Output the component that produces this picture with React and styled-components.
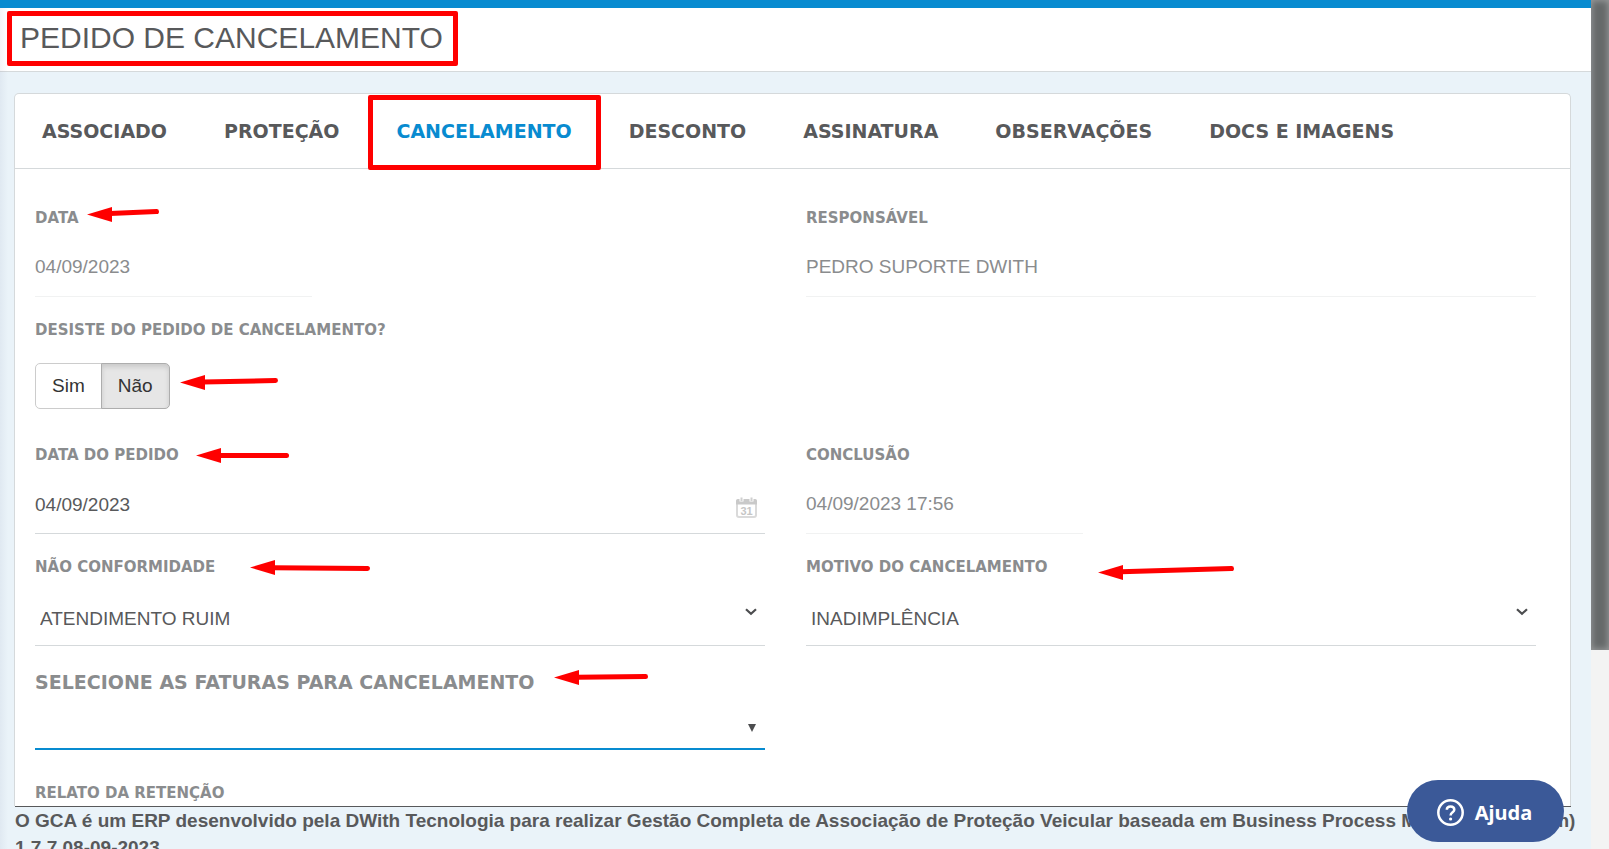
import React, { useState } from "react";
import styled, { createGlobalStyle, css } from "styled-components";

const GlobalStyle = createGlobalStyle`
  * {
    box-sizing: border-box;
  }
  body {
    margin: 0;
    background: #eaf3f9;
    color: #58595b;
    font: 19px/27px "Liberation Sans", Arial, sans-serif;
  }
`;

const heavy = css`
  font-family: "Arial Black", "DejaVu Sans", sans-serif;
  font-weight: 700;
`;

const Page = styled.div`
  display: flex;
  height: 100vh;
  overflow: hidden;
`;

const Main = styled.div`
  position: relative;
  flex: 1;
  min-width: 0;
  display: flex;
  flex-direction: column;
  border-top: 8px solid #088bd0;
  &::after {
    content: "";
    position: absolute;
    top: 0;
    bottom: 0;
    left: 0;
    width: 8px;
    background: linear-gradient(to right, rgba(60, 70, 120, 0.06), transparent);
    pointer-events: none;
  }
`;

const Header = styled.header`
  display: flex;
  padding: 3px 7px 5px;
  background: #fff;
  border-bottom: 1px solid #d5d9db;
`;

const Title = styled.h1`
  margin: 0;
  padding: 0 10px 2px 8px;
  border: 5px solid #f00;
  border-radius: 2px;
  font-size: 30px;
  font-weight: 400;
  line-height: 43px;
`;

const Card = styled.section`
  flex: 1;
  min-height: 0;
  margin: 21px 20px 0 14px;
  overflow: hidden;
  background: #fff;
  border: 1px solid #d5d9db;
  border-bottom: 0;
  border-radius: 5px 5px 0 0;
`;

const Tabs = styled.nav`
  display: flex;
  gap: 3px;
  border-bottom: 1px solid #d5d9db;
`;

const Tab = styled.button`
  ${heavy}
  position: relative;
  padding: 0 27px;
  border: 0;
  background: none;
  color: ${p => (p.$active ? "#088bd0" : "#58595b")};
  font-size: 19px;
  line-height: 74px;
  white-space: nowrap;
  cursor: pointer;
`;

const TabFrame = styled.span`
  position: absolute;
  inset: 1px -2px -2px -1px;
  border: 5px solid #f00;
  border-radius: 2px;
  pointer-events: none;
`;

const Form = styled.form`
  display: grid;
  grid-template-columns: 1fr 1fr;
  gap: 22px 41px;
  padding: 38px 34px 38px 20px;
`;

const Field = styled.div`
  position: relative;
  grid-column: ${p => p.$column || 1};
  min-width: 0;
`;

const Label = styled.label`
  ${heavy}
  display: block;
  margin-bottom: 8px;
  color: #8a8c8e;
  font-size: ${p => (p.$large ? 19 : 15)}px;
  line-height: ${p => (p.$large ? 28 : 22)}px;
  white-space: nowrap;
`;

const Input = styled.input`
  display: block;
  width: ${p => (p.$short ? "38%" : "100%")};
  height: 60px;
  padding: ${p => (p.readOnly ? 0 : 2)}px 0 0;
  border: 0;
  border-bottom: 1px solid ${p => (p.readOnly ? "#f1f2f2" : "#d5d9db")};
  outline: 0;
  background: none;
  color: ${p => (p.readOnly ? "#8a8c8e" : "#58595b")};
  font: inherit;
`;

const Select = styled.select`
  display: block;
  width: 100%;
  height: ${p => (p.$focus ? 46 : 60)}px;
  padding: 5px 40px 0 5px;
  border: 0;
  border-bottom: ${p => (p.$focus ? "2px solid #088bd0" : "1px solid #d5d9db")};
  border-radius: 0;
  outline: 0;
  appearance: none;
  background: none;
  color: #58595b;
  font: inherit;
`;

const Control = styled.div`
  position: relative;
  margin-bottom: ${p => (p.$spaced ? 10 : 0)}px;
`;

const ControlIcon = styled.svg`
  position: absolute;
  right: 8px;
  bottom: ${p => p.$bottom || 16}px;
  pointer-events: none;
`;

const Toggle = styled.div`
  display: flex;
  margin: 22px 0 13px;
`;

const ToggleButton = styled.button`
  height: 46px;
  padding: 0 16px 2px;
  border: 1px solid ${p => (p.$on ? "#adadad" : "#ccc")};
  border-radius: 5px 0 0 5px;
  background: ${p => (p.$on ? "#e6e6e6" : "#fff")};
  box-shadow: ${p => (p.$on ? "inset 0 3px 5px rgba(0, 0, 0, 0.125)" : "none")};
  color: #333;
  font: inherit;
  cursor: pointer;
  & + & {
    margin-left: -1px;
    border-radius: 0 5px 5px 0;
  }
`;

const Footer = styled.footer`
  height: 43px;
  margin: 0 20px 0 15px;
  border-top: 1px solid #58595b;
  font-weight: 700;
  white-space: nowrap;
`;

const Track = styled.div`
  width: 18px;
  background: #f3f3f3;
`;

const Thumb = styled.div`
  height: 76.6%;
  background: #66696a;
  box-shadow: inset 0 0 6px 1px #999b9c;
`;

const Help = styled.button`
  position: fixed;
  right: 45px;
  bottom: 7px;
  display: flex;
  align-items: center;
  justify-content: center;
  gap: 11px;
  width: 157px;
  height: 62px;
  padding: 2px 2px 0 0;
  border: 0;
  border-radius: 31px;
  background: #3b5998;
  color: #fff;
  font: 700 20px "Noto Sans", sans-serif;
  cursor: pointer;
`;

const ArrowSvg = styled.svg`
  position: absolute;
  top: ${p => p.$top}px;
  left: ${p => p.$left}px;
  overflow: visible;
  pointer-events: none;
`;

// Red pointer: the tip is at (left, top), the tail ends `length` to the right.
const Arrow = ({ left, top, length, rise = 0 }) => (
  <ArrowSvg $left={left} $top={top} width={length} height="1" aria-hidden="true">
    <path d="M0 -0.5 L25 -8 V7 Z" fill="#f00" />
    <path
      d={`M23 ${(-rise * 23) / length - 0.5} L${length - 2.5} ${-rise - 0.5}`}
      stroke="#f00"
      strokeWidth="5"
      strokeLinecap="round"
    />
  </ArrowSvg>
);

const Chevron = () => (
  <ControlIcon $bottom={30} width="12" height="8" viewBox="0 0 12 8">
    <path d="M1 1.2 L6 5.8 L11 1.2" fill="none" stroke="#4c4d4f" strokeWidth="2.2" />
  </ControlIcon>
);

const Triangle = () => (
  <ControlIcon $bottom={18} width="10" height="8" viewBox="0 0 10 8">
    <path d="M1 0 H9 L5 8 Z" fill="#4c4d4f" />
  </ControlIcon>
);

const Calendar = () => (
  <ControlIcon $bottom={16} width="21" height="21" viewBox="0 0 21 21">
    <rect x="1" y="3" width="19" height="17" rx="2" fill="#fff" stroke="#dadada" strokeWidth="2" />
    <path d="M0 7.5 V4 Q0 2 2 2 H19 Q21 2 21 4 V7.5 Z" fill="#c9c9c9" />
    <path d="M5.5 0 V4.5 M15.5 0 V4.5" stroke="#fff" strokeWidth="4" />
    <path d="M5.5 0.5 V4 M15.5 0.5 V4" stroke="#d0d0d0" strokeWidth="2" />
    <text
      x="10.5"
      y="17.5"
      textAnchor="middle"
      fill="#c6c6c6"
      fontFamily="Liberation Sans, sans-serif"
      fontSize="11"
      fontWeight="700"
    >
      31
    </text>
  </ControlIcon>
);

const HelpIcon = () => (
  <svg width="27" height="27" viewBox="0 0 27 27" fill="none" stroke="#fff" aria-hidden="true">
    <circle cx="13.5" cy="13.5" r="12.2" strokeWidth="2.5" />
    <path
      d="M9.8 10.8 C9.8 6.4 17.3 6.4 17.3 10.8 C17.3 13.5 13.6 13.3 13.6 16.6"
      strokeWidth="2.5"
    />
    <circle cx="13.6" cy="20" r="1.6" fill="#fff" stroke="none" />
  </svg>
);

const tabs = [
  "ASSOCIADO",
  "PROTEÇÃO",
  "CANCELAMENTO",
  "DESCONTO",
  "ASSINATURA",
  "OBSERVAÇÕES",
  "DOCS E IMAGENS"
];

const SelectField = ({ id, label, value, column, children }) => (
  <Field $column={column}>
    <Label htmlFor={id}>{label}</Label>
    <Control>
      <Select id={id} defaultValue={value}>
        <option>{value}</option>
      </Select>
      <Chevron />
    </Control>
    {children}
  </Field>
);

export default function App() {
  const [tab, setTab] = useState("CANCELAMENTO");
  const [desiste, setDesiste] = useState("Não");

  return (
    <Page>
      <GlobalStyle />
      <Main>
        <Header>
          <Title>PEDIDO DE CANCELAMENTO</Title>
        </Header>
        <Card>
          <Tabs>
            {tabs.map(name => (
              <Tab key={name} type="button" $active={name === tab} onClick={() => setTab(name)}>
                {name}
                {name === "CANCELAMENTO" && <TabFrame />}
              </Tab>
            ))}
          </Tabs>
          <Form>
            <Field>
              <Label htmlFor="data">DATA</Label>
              <Input id="data" $short readOnly defaultValue="04/09/2023" />
              <Arrow left={52} top={8} length={72} rise={3} />
            </Field>
            <Field $column={2}>
              <Label htmlFor="responsavel">RESPONSÁVEL</Label>
              <Input id="responsavel" readOnly defaultValue="PEDRO SUPORTE DWITH" />
            </Field>
            <Field>
              <Label as="div" id="desiste">
                DESISTE DO PEDIDO DE CANCELAMENTO?
              </Label>
              <Toggle role="group" aria-labelledby="desiste">
                {["Sim", "Não"].map(v => (
                  <ToggleButton
                    key={v}
                    type="button"
                    $on={v === desiste}
                    aria-pressed={v === desiste}
                    onClick={() => setDesiste(v)}
                  >
                    {v}
                  </ToggleButton>
                ))}
              </Toggle>
              <Arrow left={145} top={64} length={98} rise={2} />
            </Field>
            <Field>
              <Label htmlFor="pedido">DATA DO PEDIDO</Label>
              <Control>
                <Input id="pedido" defaultValue="04/09/2023" />
                <Calendar />
              </Control>
              <Arrow left={161} top={12} length={93} />
            </Field>
            <Field $column={2}>
              <Label htmlFor="conclusao">CONCLUSÃO</Label>
              <Input id="conclusao" $short readOnly defaultValue="04/09/2023 17:56" />
            </Field>
            <SelectField id="conformidade" label="NÃO CONFORMIDADE" value="ATENDIMENTO RUIM">
              <Arrow left={215} top={12} length={120} rise={-1} />
            </SelectField>
            <SelectField
              id="motivo"
              label="MOTIVO DO CANCELAMENTO"
              value="INADIMPLÊNCIA"
              column={2}
            >
              <Arrow left={292} top={17} length={136} rise={4} />
            </SelectField>
            <Field>
              <Label htmlFor="faturas" $large>
                SELECIONE AS FATURAS PARA CANCELAMENTO
              </Label>
              <Control $spaced>
                <Select id="faturas" $focus defaultValue="">
                  <option value="" />
                </Select>
                <Triangle />
              </Control>
              <Arrow left={519} top={10} length={94} rise={1} />
            </Field>
            <Field>
              <Label htmlFor="relato">RELATO DA RETENÇÃO</Label>
              <Input id="relato" as="textarea" />
            </Field>
          </Form>
        </Card>
        <Footer>
          O GCA é um ERP desenvolvido pela DWith Tecnologia para realizar Gestão Completa de
          Associação de Proteção Veicular baseada em Business Process Management (bpm)
          <br />
          1.7.7 08-09-2023
        </Footer>
      </Main>
      <Track>
        <Thumb />
      </Track>
      <Help type="button">
        <HelpIcon />
        Ajuda
      </Help>
    </Page>
  );
}
